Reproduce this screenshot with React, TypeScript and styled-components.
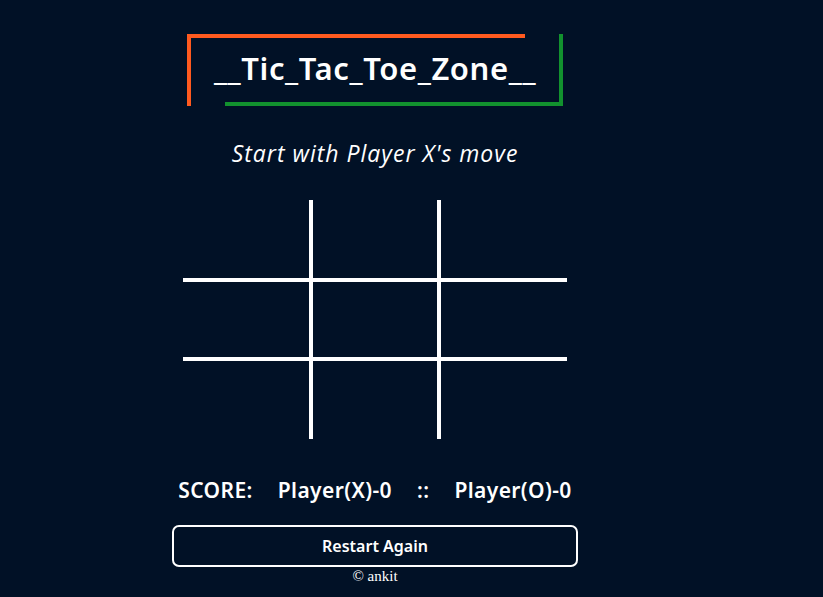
import React, { useState } from "react";
import styled, { createGlobalStyle } from "styled-components";

const Global = createGlobalStyle`
  html, body { margin: 0; padding: 0; background: #011126; }
  body { font-family: "Liberation Serif", serif; color: #fff; }
`;

const Page = styled.div`
  width: 750px;
  min-height: 597px;
  display: flex;
  flex-direction: column;
  align-items: center;
  padding-top: 34px;
  box-sizing: border-box;
`;

const TitleBox = styled.h1`
  position: relative;
  margin: 0;
  width: 376px;
  height: 72px;
  box-sizing: border-box;
  display: flex;
  align-items: center;
  justify-content: center;
  font-family: "Noto Sans", sans-serif;
  font-weight: 600;
  font-size: 31px;
  letter-spacing: 0.6px;
  color: #fff;
  padding-bottom: 4px;

  &::before {
    content: "";
    position: absolute;
    left: 0;
    top: 0;
    width: 90%;
    height: 100%;
    border-top: 4px solid #ff5a1f;
    border-left: 4px solid #ff5a1f;
    box-sizing: border-box;
  }
  &::after {
    content: "";
    position: absolute;
    right: 0;
    bottom: 0;
    width: 90%;
    height: 100%;
    border-bottom: 4px solid #12922e;
    border-right: 4px solid #12922e;
    box-sizing: border-box;
  }
`;

const Status = styled.p`
  margin: 32px 0 0;
  font-family: "Open Sans", sans-serif;
  font-style: italic;
  font-size: 23px;
  line-height: 30px;
  letter-spacing: 1px;
  color: #fff;
`;

const Board = styled.div`
  margin-top: 32px;
  display: grid;
  grid-template-columns: 128px 128px 128px;
  grid-template-rows: 80px 79px 80px;
`;

const Cell = styled.button<{ $r: number; $c: number }>`
  background: transparent;
  border: none;
  padding: 0;
  margin: 0;
  color: #fff;
  font-family: "Noto Sans", sans-serif;
  font-size: 44px;
  cursor: pointer;
  box-sizing: border-box;
  border-top: ${(p) => (p.$r > 0 ? "4px solid #fff" : "none")};
  border-left: ${(p) => (p.$c > 0 ? "4px solid #fff" : "none")};
  margin-top: ${(p) => (p.$r > 0 ? "-2px" : "0")};
  margin-left: ${(p) => (p.$c > 0 ? "-2px" : "0")};
`;

const ScoreRow = styled.div`
  margin-top: 37px;
  display: flex;
  gap: 25px;
  font-family: "Noto Sans", sans-serif;
  font-weight: 600;
  font-size: 21px;
  line-height: 28px;
  color: #fff;
  letter-spacing: 0.4px;
`;

const RestartButton = styled.button`
  margin-top: 21px;
  width: 406px;
  height: 42px;
  background: transparent;
  border: 2px solid #fff;
  border-radius: 7px;
  color: #fff;
  font-family: "Noto Sans", sans-serif;
  font-weight: 600;
  font-size: 16px;
  cursor: pointer;
`;

const Footer = styled.div`
  margin-top: 1px;
  font-family: "Liberation Serif", serif;
  font-size: 15px;
  color: #fff;
`;

export default function App() {
  const [cells, setCells] = useState<string[]>(Array(9).fill(""));
  const [turn, setTurn] = useState("X");
  const play = (i: number) => {
    if (cells[i]) return;
    const n = cells.slice();
    n[i] = turn;
    setCells(n);
    setTurn(turn === "X" ? "O" : "X");
  };
  return (
    <>
      <Global />
      <Page>
        <TitleBox>__Tic_Tac_Toe_Zone__</TitleBox>
        <Status>Start with Player X's move</Status>
        <Board>
          {cells.map((v, i) => (
            <Cell key={i} $r={Math.floor(i / 3)} $c={i % 3} onClick={() => play(i)}>
              {v}
            </Cell>
          ))}
        </Board>
        <ScoreRow>
          <span>SCORE:</span>
          <span>Player(X)-0</span>
          <span>::</span>
          <span>Player(O)-0</span>
        </ScoreRow>
        <RestartButton
          onClick={() => {
            setCells(Array(9).fill(""));
            setTurn("X");
          }}
        >
          Restart Again
        </RestartButton>
        <Footer>© ankit</Footer>
      </Page>
    </>
  );
}
